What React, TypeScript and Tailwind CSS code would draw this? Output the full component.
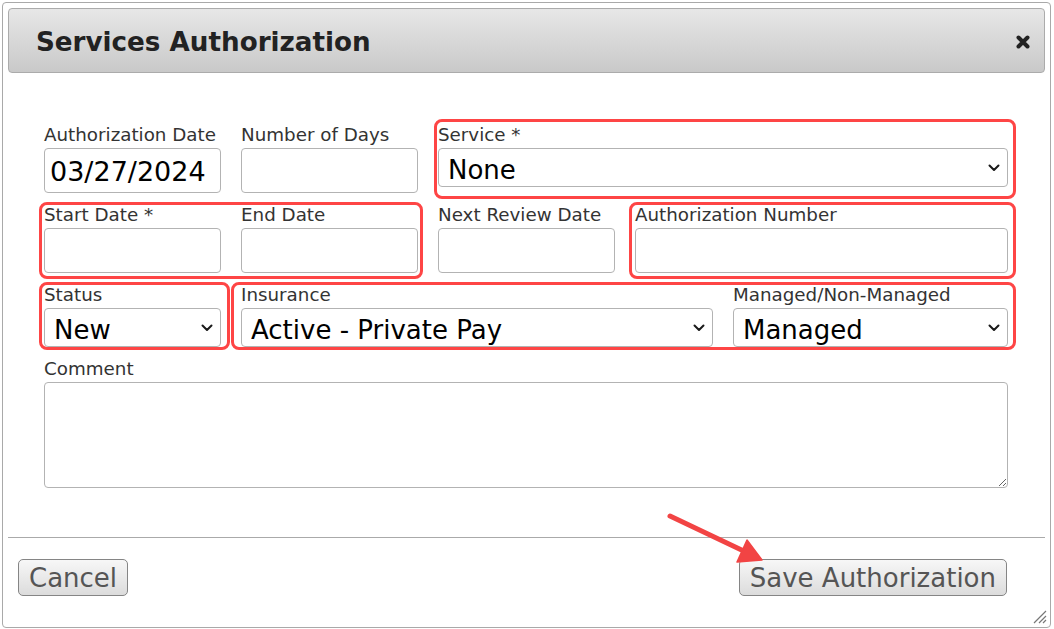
import React from "react";

const font = { fontFamily: '"DejaVu Sans", Verdana, sans-serif' };

function Chevron() {
  return (
    <svg
      className="pointer-events-none absolute right-[8px] top-1/2 -translate-y-1/2"
      width="12"
      height="8"
      viewBox="0 0 12 8"
    >
      <path d="M1.5 1.5 L6 6 L10.5 1.5" fill="none" stroke="#1a1a1a" strokeWidth="2" strokeLinecap="round" strokeLinejoin="round" />
    </svg>
  );
}

function Label({ children }: { children: React.ReactNode }) {
  return <label className="block whitespace-nowrap text-[18.3px] leading-[21px] text-[#333] mb-[3px]">{children}</label>;
}

function TextBox({ value = "" }: { value?: string }) {
  return (
    <input
      readOnly
      value={value}
      className="block w-full h-[45px] border border-[#b3b3b3] rounded-[4px] bg-white px-[5px] pt-[2px] text-[27px] text-black outline-none"
    />
  );
}

function Select({ value }: { value: string }) {
  return (
    <div className="relative">
      <select
        value={value}
        onChange={() => {}}
        className="block w-full h-[39px] appearance-none border border-[#b3b3b3] rounded-[4px] bg-white pl-[9px] pr-[28px] pt-[4px] text-[26px] leading-[32px] text-black outline-none"
      >
        <option>{value}</option>
      </select>
      <Chevron />
    </div>
  );
}

function Button({ children }: { children: React.ReactNode }) {
  return (
    <button className="h-[37px] px-[10px] pt-[1px] border border-[#858585] rounded-[5px] bg-linear-to-b from-[#f7f7f7] to-[#dcdcdc] text-[26px] leading-[34px] text-[#555]">
      {children}
    </button>
  );
}

export default function App() {
  return (
    <div className="relative w-[1054px] h-[629px] overflow-hidden bg-white" style={font}>
      {/* Dialog */}
      <div className="relative ml-[2px] mt-[2px] w-[1049px] h-[626px] border border-[#a9a9a9] rounded-[4px] bg-white p-[5px]">
        {/* Title bar */}
        <div className="flex h-[65px] items-center justify-between border border-[#ababab] rounded-[4px] bg-linear-to-b from-[#e7e7e7] to-[#c9c9c9] pl-[27px] pr-[13px]">
          <h1 className="mt-[3px] text-[26.2px] font-bold text-[#222] leading-none">Services Authorization</h1>
          <svg width="16" height="16" viewBox="0 0 16 16" className="mt-[2px]">
            <path d="M3.5 3.5 L12.5 12.5 M12.5 3.5 L3.5 12.5" stroke="#222" strokeWidth="4" strokeLinecap="round" />
          </svg>
        </div>

        {/* Form */}
        <div className="px-[36px] pt-[51px]">
          <div className="grid grid-cols-[177px_177px_177px_373px] gap-x-[20px]">
            <div>
              <Label>Authorization Date</Label>
              <TextBox value="03/27/2024" />
            </div>
            <div>
              <Label>Number of Days</Label>
              <TextBox />
            </div>
            <div className="col-span-2">
              <Label>Service *</Label>
              <Select value="None" />
            </div>
          </div>

          <div className="mt-[11px] grid grid-cols-[177px_177px_177px_373px] gap-x-[20px]">
            <div>
              <Label>Start Date *</Label>
              <TextBox />
            </div>
            <div>
              <Label>End Date</Label>
              <TextBox />
            </div>
            <div>
              <Label>Next Review Date</Label>
              <TextBox />
            </div>
            <div>
              <Label>Authorization Number</Label>
              <TextBox />
            </div>
          </div>

          <div className="mt-[11px] flex gap-x-[20px]">
            <div className="w-[177px]">
              <Label>Status</Label>
              <Select value="New" />
            </div>
            <div className="w-[472px]">
              <Label>Insurance</Label>
              <Select value="Active - Private Pay" />
            </div>
            <div className="w-[275px]">
              <Label>Managed/Non-Managed</Label>
              <Select value="Managed" />
            </div>
          </div>

          <div className="mt-[11px] w-[964px]">
            <Label>Comment</Label>
            <textarea
              readOnly
              className="block w-full h-[106px] border border-[#b3b3b3] rounded-[4px] bg-white outline-none"
            />
          </div>
        </div>

        {/* Footer */}
        <div className="mt-[49px] border-t border-[#aaaaaa]" />
        <div className="flex justify-between pl-[10px] pr-[38px] pt-[21px]">
          <Button>Cancel</Button>
          <Button>Save Authorization</Button>
        </div>

        {/* Resize grip */}
        <svg className="absolute right-[3px] bottom-[3px]" width="16" height="16" viewBox="0 0 16 16">
          <path d="M15 3 L3 15 M15 8 L8 15 M15 12 L12 15" stroke="#777" strokeWidth="1.2" />
        </svg>
      </div>

      {/* Red annotation boxes */}
      <div className="pointer-events-none absolute left-[434px] top-[119px] w-[582px] h-[80px] border-[3px] border-[#fe4545] rounded-[8px]" />
      <div className="pointer-events-none absolute left-[39px] top-[202px] w-[384px] h-[77px] border-[3px] border-[#fe4545] rounded-[8px]" />
      <div className="pointer-events-none absolute left-[629px] top-[202px] w-[387px] h-[77px] border-[3px] border-[#fe4545] rounded-[8px]" />
      <div className="pointer-events-none absolute left-[39px] top-[282px] w-[191px] h-[68px] border-[3px] border-[#fe4545] rounded-[8px]" />
      <div className="pointer-events-none absolute left-[231px] top-[282px] w-[785px] h-[68px] border-[3px] border-[#fe4545] rounded-[8px]" />

      {/* Arrow */}
      <svg className="pointer-events-none absolute left-0 top-0" width="1054" height="629">
        <line x1="670" y1="516" x2="750" y2="554" stroke="#f24444" strokeWidth="5" strokeLinecap="round" />
        <polygon points="762,560 747,540 737,562" fill="#f24444" stroke="#f24444" strokeWidth="1.5" strokeLinejoin="round" />
      </svg>
    </div>
  );
}
